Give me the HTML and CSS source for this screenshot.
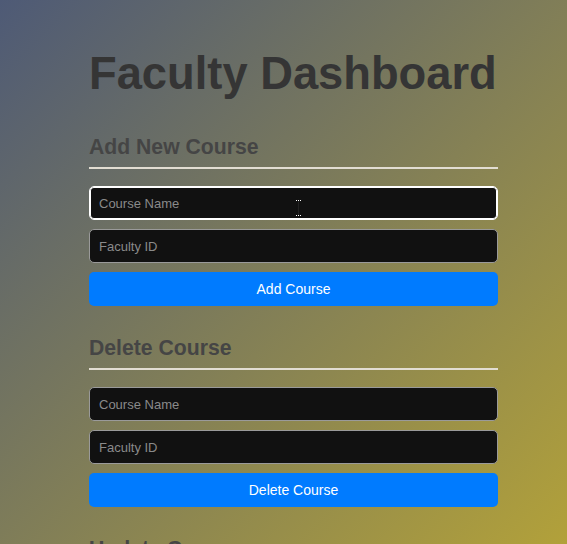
FILE: index.html
```html
<!DOCTYPE html>
<html lang="en">
<head>
<meta charset="utf-8">
<title>Faculty Dashboard</title>
<link rel="stylesheet" href="styles.css">
</head>
<body>
<main class="dashboard">
  <h1 class="title">Faculty Dashboard</h1>

  <section class="panel">
    <h2 class="panel-title">Add New Course</h2>
    <form class="panel-form">
      <div class="field-wrap">
        <input class="field is-focused" type="text" placeholder="Course Name">
        <span class="ibeam"></span>
      </div>
      <input class="field" type="text" placeholder="Faculty ID">
      <button class="btn" type="button">Add Course</button>
    </form>
  </section>

  <section class="panel">
    <h2 class="panel-title">Delete Course</h2>
    <form class="panel-form">
      <input class="field" type="text" placeholder="Course Name">
      <input class="field" type="text" placeholder="Faculty ID">
      <button class="btn" type="button">Delete Course</button>
    </form>
  </section>

  <section class="panel">
    <h2 class="panel-title">Update Course</h2>
    <form class="panel-form">
      <input class="field" type="text" placeholder="Course Name">
      <input class="field" type="text" placeholder="Faculty ID">
      <button class="btn" type="button">Update Course</button>
    </form>
  </section>
</main>
</body>
</html>
```
FILE: styles.css
```css
html, body {
  margin: 0;
  padding: 0;
}

body {
  min-height: 100vh;
  background: linear-gradient(135deg, #4e5a76 0%, #b2a13a 100%) fixed;
  font-family: "Liberation Sans", Arial, sans-serif;
  overflow: hidden;
}

.dashboard {
  width: 409px;
  margin-left: 89px;
  padding-top: 48px;
  display: flex;
  flex-direction: column;
  gap: 30px;
}

.title {
  margin: 0 0 5px 0;
  font-size: 45.3px;
  line-height: 52px;
  font-weight: bold;
  color: #353535;
  white-space: nowrap;
}

.panel {
  display: flex;
  flex-direction: column;
}

.panel-title {
  margin: 0;
  font-size: 21.2px;
  line-height: 24px;
  font-weight: bold;
  color: #454545;
  padding-bottom: 8px;
  border-bottom: 2px solid #e2ddd2;
}

.panel-form {
  margin-top: 17px;
  display: flex;
  flex-direction: column;
  gap: 9px;
}

.field-wrap {
  position: relative;
  display: flex;
}

.field {
  box-sizing: border-box;
  width: 100%;
  height: 34px;
  margin: 0;
  padding: 0 9px;
  background: #111111;
  border: 1px solid #9a9a9a;
  border-radius: 5px;
  color: #dddddd;
  font-family: "Liberation Sans", Arial, sans-serif;
  font-size: 13px;
  outline: none;
}

.field::placeholder {
  color: #8a8a8a;
}

.field.is-focused {
  border-color: #ffffff;
  box-shadow: inset 0 0 0 1px #ffffff;
}

.ibeam {
  position: absolute;
  left: 207px;
  top: 14px;
  width: 5px;
  height: 16px;
  border-top: 1px dotted #ffffff;
  border-bottom: 1px dotted #ffffff;
  box-sizing: border-box;
}

.ibeam::before {
  content: "";
  position: absolute;
  left: 2px;
  top: 0;
  width: 1px;
  height: 14px;
  background: #222222;
}

.btn {
  box-sizing: border-box;
  width: 100%;
  height: 34px;
  margin: 0;
  padding: 0;
  background: #007bff;
  color: #ffffff;
  border: none;
  border-radius: 5px;
  font-family: "Liberation Sans", Arial, sans-serif;
  font-size: 14px;
  cursor: pointer;
}
```
